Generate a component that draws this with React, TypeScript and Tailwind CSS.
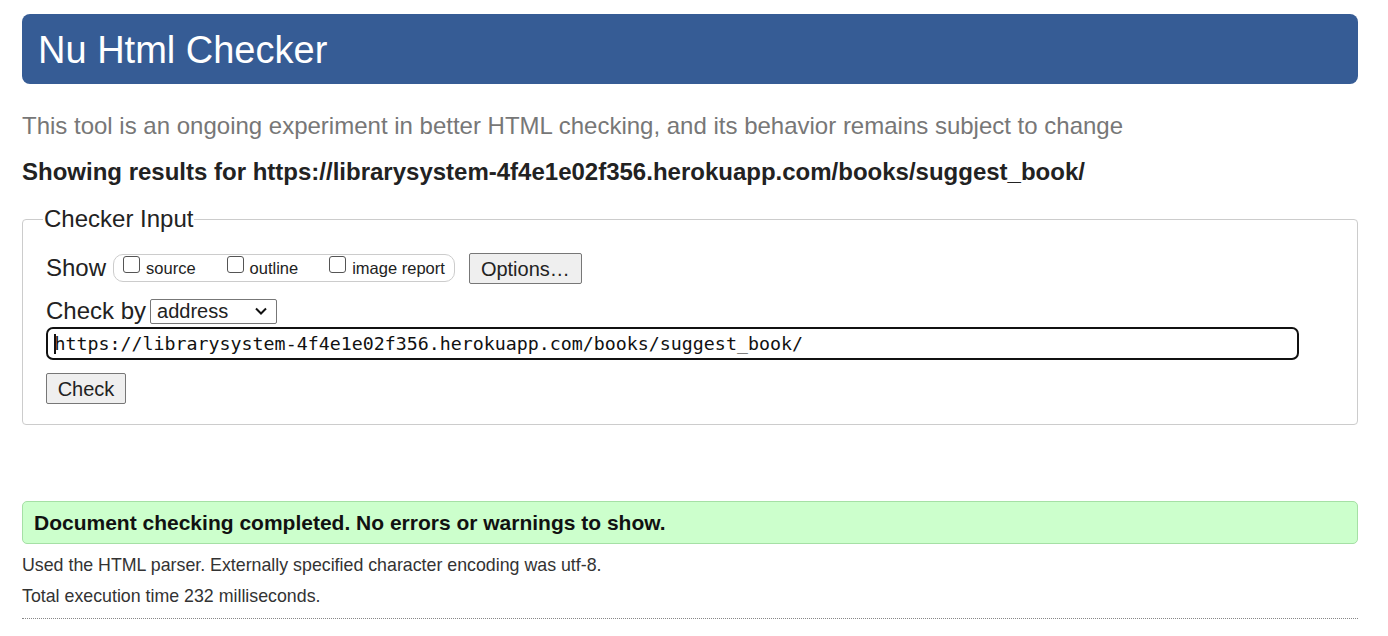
import React from "react";

function Box() {
  return <span className="w-[17px] h-[17px] border border-[#555] rounded-[3px] bg-white mr-[6px] -mt-[7px] shrink-0" />;
}

export default function App() {
  return (
    <div className="min-h-screen bg-white pl-[22px] pr-[30px] pt-[14px] text-[#222]" style={{ fontFamily: '"Liberation Sans", Arial, sans-serif' }}>
      <header className="h-[70px] rounded-[8px] bg-[#365c95] flex items-center pl-[16px] pt-[2px]">
        <h1 className="text-white text-[38px] leading-none font-normal">Nu Html Checker</h1>
      </header>

      <p className="mt-[28px] text-[24px] leading-[28px] text-[#777]">
        This tool is an ongoing experiment in better HTML checking, and its behavior remains subject to change
      </p>
      <p className="mt-[18px] text-[24px] leading-[28px] font-bold text-[#222]">
        Showing results for https://librarysystem-4f4e1e02f356.herokuapp.com/books/suggest_book/
      </p>

      <fieldset className="mt-[19px] border border-[#ccc] rounded-[4px] pl-[23px] pr-[10px] pb-[20px] pt-[19px]">
        <legend className="text-[24px] leading-[28px] px-[1px] -ml-[3px] text-[#222]">Checker Input</legend>
        <div className="flex items-center h-[32px]">
          <span className="text-[24px] mr-[7px]">Show</span>
          <div className="flex items-center h-[28px] border border-[#ccc] rounded-[10px] pl-[9px] pr-[9px]">
            <label className="flex items-center">
              <Box />
              <span className="text-[16.5px]">source</span>
            </label>
            <label className="flex items-center ml-[31px]">
              <Box />
              <span className="text-[16.5px]">outline</span>
            </label>
            <label className="flex items-center ml-[31px]">
              <Box />
              <span className="text-[16.5px]">image report</span>
            </label>
          </div>
          <button className="ml-[14px] h-[31px] w-[113px] border border-[#777] rounded-[2px] bg-[#efefef] text-[20px] text-[#222]">
            Options…
          </button>
        </div>

        <div className="flex items-center mt-[14px] h-[26px]">
          <span className="text-[24px] mr-[4px]">Check by</span>
          <div className="flex items-center justify-between w-[127px] h-[25px] border border-[#777] rounded-[2px] pl-[6px] pr-[8px]">
            <span className="text-[20px] leading-none">address</span>
            <svg width="14" height="10" viewBox="0 0 14 10" fill="none">
              <path d="M2 2.5 L7 7.5 L12 2.5" stroke="#111" strokeWidth="2" />
            </svg>
          </div>
        </div>

        <div className="mt-[3px] w-[1253px] h-[33px] border-2 border-[#111] rounded-[7px] flex items-center pl-[6px]">
          <span className="w-[1.5px] h-[20px] bg-[#111]" />
          <span className="text-[18.3px] -ml-[1px] text-[#111]" style={{ fontFamily: '"DejaVu Sans Mono", "Liberation Mono", monospace' }}>
            https://librarysystem-4f4e1e02f356.herokuapp.com/books/suggest_book/
          </span>
        </div>

        <button className="mt-[13px] h-[31px] w-[80px] border border-[#777] rounded-[2px] bg-[#efefef] text-[20px] text-[#222]">
          Check
        </button>
      </fieldset>

      <div className="mt-[76px] h-[43px] rounded-[5px] border border-[#a5e0a5] bg-[#ccffcc] flex items-center pl-[11px]">
        <span className="text-[21px] font-bold text-[#111]">Document checking completed. No errors or warnings to show.</span>
      </div>

      <p className="mt-[11px] text-[17.8px] leading-[21px] text-[#333]">Used the HTML parser. Externally specified character encoding was utf-8.</p>
      <p className="mt-[10px] text-[17.8px] leading-[21px] text-[#333]">Total execution time 232 milliseconds.</p>
      <div className="mt-[11px] border-t border-dotted border-[#888]" />
    </div>
  );
}
